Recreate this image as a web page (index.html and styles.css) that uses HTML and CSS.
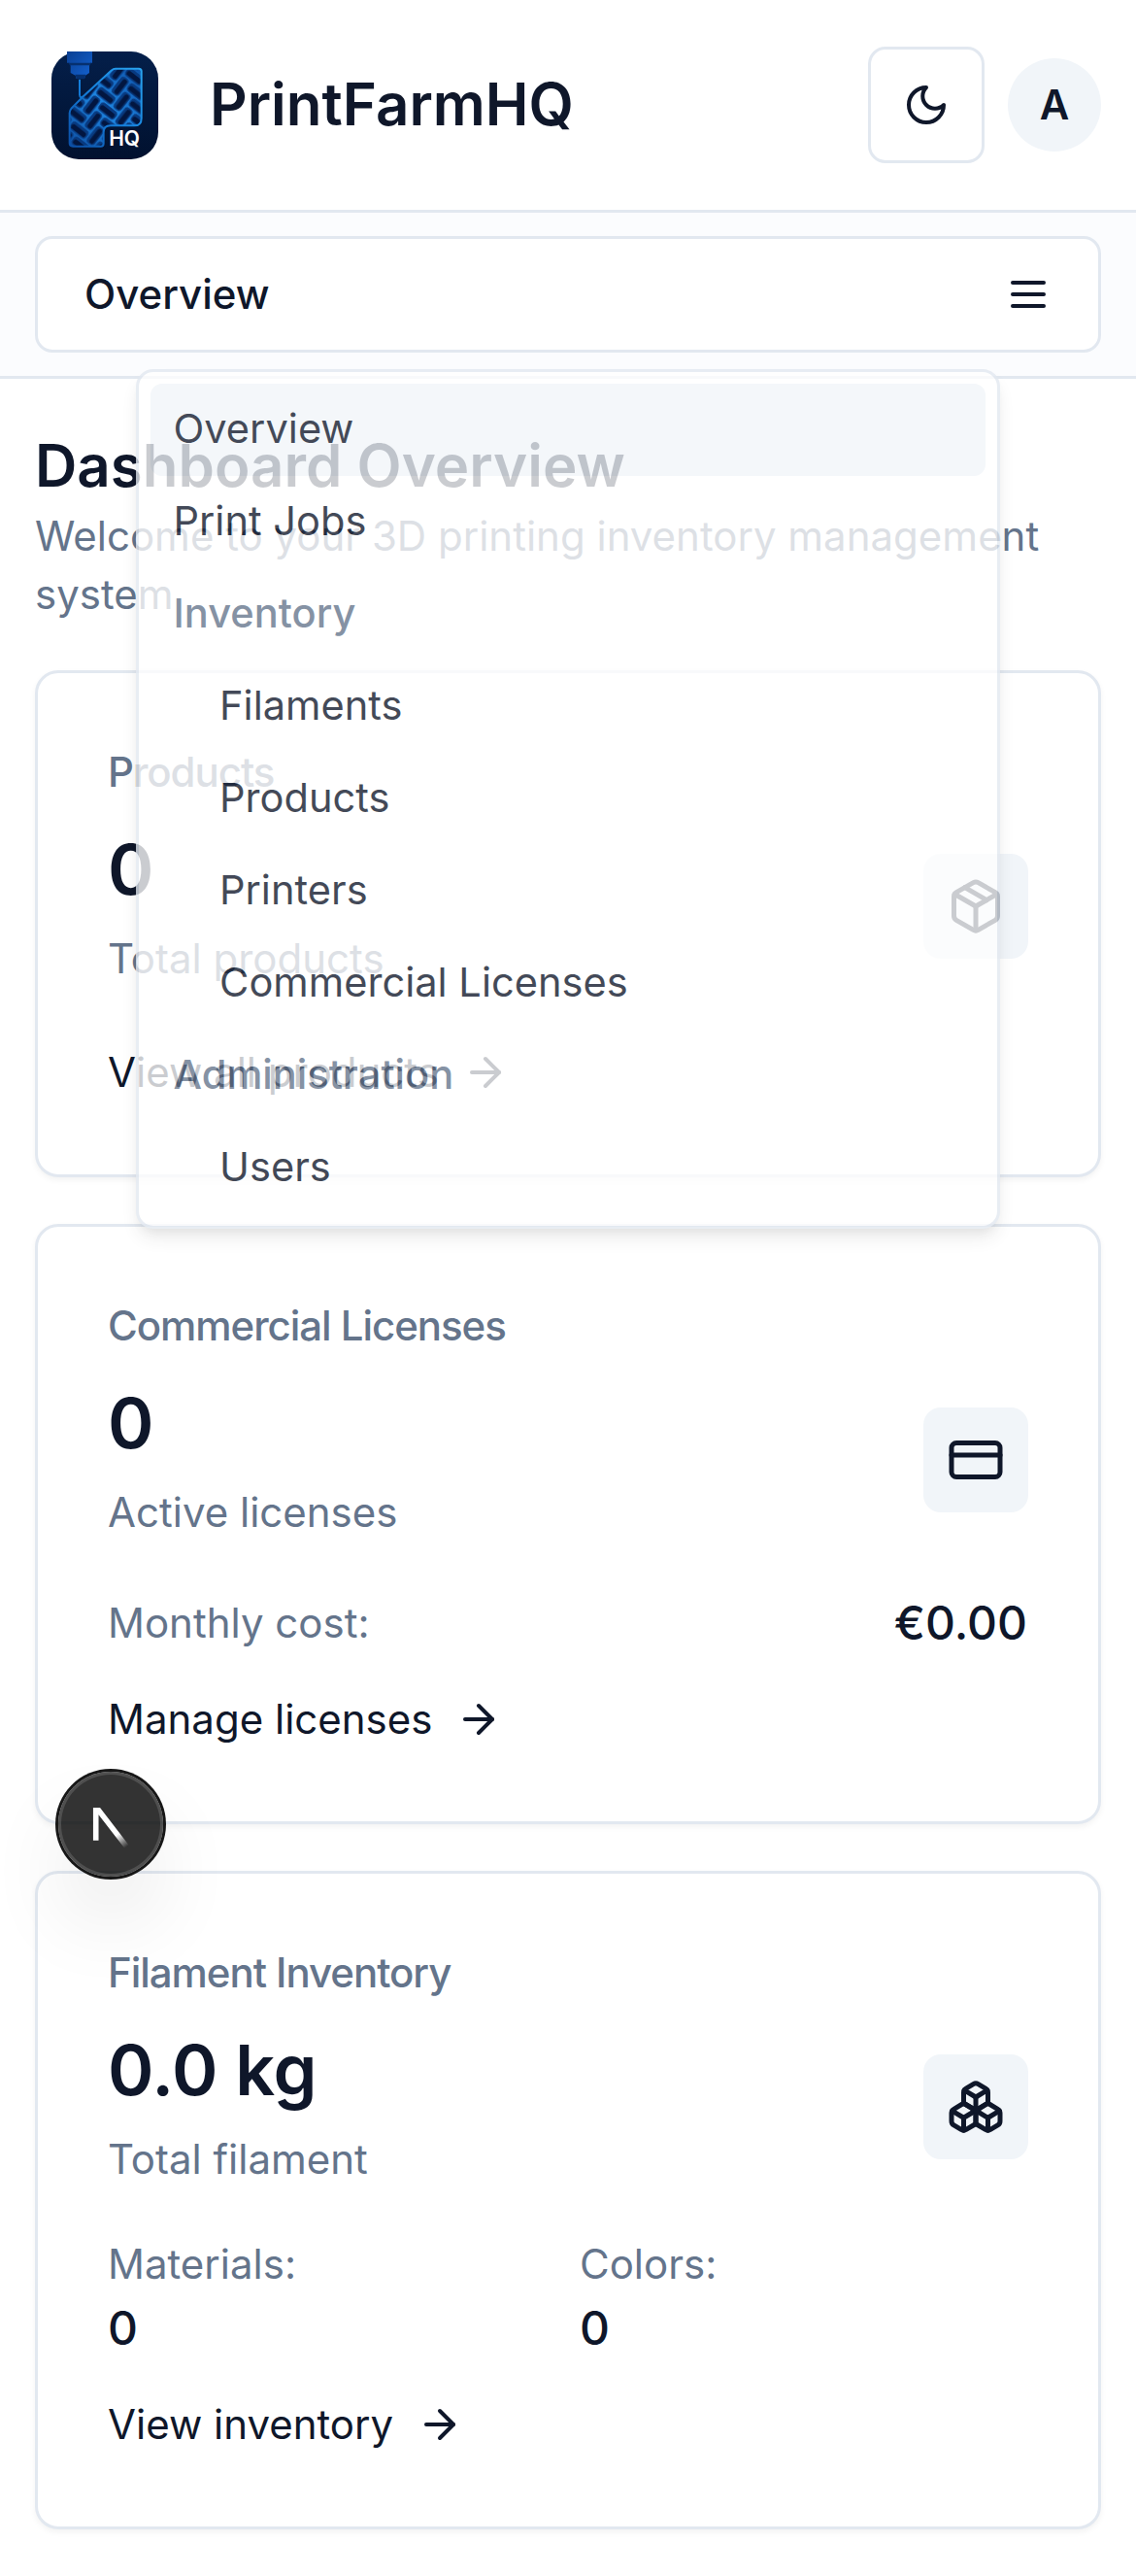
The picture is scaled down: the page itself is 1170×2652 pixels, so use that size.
FILE: index.html
```html
<!DOCTYPE html>
<html lang="en">
<head>
<meta charset="utf-8">
<title>PrintFarmHQ</title>
<link rel="stylesheet" href="styles.css">
</head>
<body>
<svg class="defs" width="0" height="0" aria-hidden="true">
  <symbol id="arrow" viewBox="0 0 24 24"><path d="M5 12h14"/><path d="m12 5 7 7-7 7"/></symbol>
</svg>

<header class="topbar">
  <div class="brand">
    <svg class="logo" viewBox="0 0 330 333">
      <defs>
        <linearGradient id="tile" x1="0" y1="0" x2="0" y2="1"><stop offset="0" stop-color="#041f4a"/><stop offset="1" stop-color="#01112f"/></linearGradient>
        <linearGradient id="edge" x1="1" y1="0" x2="0" y2="1"><stop offset="0" stop-color="#2aa5f0"/><stop offset=".5" stop-color="#1580dc"/><stop offset="1" stop-color="#0b4ea6"/></linearGradient>
        <linearGradient id="strand" x1="1" y1="0" x2="0" y2="1"><stop offset="0" stop-color="#0d4fa6"/><stop offset=".5" stop-color="#1e86e2"/><stop offset="1" stop-color="#0d4c9f"/></linearGradient>
        <linearGradient id="metal" x1="0" y1="0" x2="1" y2="1"><stop offset="0" stop-color="#0a3f92"/><stop offset="1" stop-color="#1463d2"/></linearGradient>
        <clipPath id="part"><path d="M56 184 191 54H270Q278 54 278 62V206Q278 229 256 229H182Q161 229 161 250V284Q161 293 152 293H66Q56 293 56 283Z"/></clipPath>
        <!-- herringbone infill, one repeat is four cells square -->
        <pattern id="weave" width="112" height="112" patternUnits="userSpaceOnUse" patternTransform="translate(46 20) rotate(38) scale(1.2)">
          <g class="cell">
            <rect x="2" y="2" width="52" height="24" rx="9"/>
            <rect x="30" y="30" width="52" height="24" rx="9"/>
            <rect x="58" y="58" width="52" height="24" rx="9"/>
            <rect x="86" y="86" width="52" height="24" rx="9"/>
            <rect x="-26" y="86" width="52" height="24" rx="9"/>
            <rect x="86" y="2" width="24" height="52" rx="9"/>
            <rect x="2" y="30" width="24" height="52" rx="9"/>
            <rect x="30" y="58" width="24" height="52" rx="9"/>
            <rect x="58" y="86" width="24" height="52" rx="9"/>
            <rect x="58" y="-26" width="24" height="52" rx="9"/>
          </g>
          <g class="hollow">
            <path d="M12 16H44M40 44H72M68 72H100M96 100H128M-16 100H16"/>
            <path d="M100 12V44M16 40V72M44 68V100M72 96V128M72 -16V16"/>
          </g>
        </pattern>
      </defs>
      <rect width="330" height="333" rx="84" fill="url(#tile)"/>
      <g clip-path="url(#part)">
        <rect x="50" y="50" width="235" height="250" fill="url(#strand)"/>
        <rect width="330" height="333" fill="url(#weave)"/>
      </g>
      <path d="M87 86V133Q88 148 99 138L186 58Q191 53 198 53H270Q278 53 278 61V206Q278 229 256 229H182Q161 229 161 250V284Q161 293 152 293H66Q56 293 56 283V190Q56 182 62 175L99 138" fill="none" stroke="url(#edge)" stroke-width="6" stroke-linejoin="round"/>
      <path d="M48 0H126V35H120L117 44V66L105 74L102 84H77L74 74L59 66V44L55 35H48Z" fill="url(#metal)"/>
      <path d="M52 35H123L118 43H57ZM73 71H106L102 85H78Z" fill="#06306f"/>
      <text x="178" y="291" class="logo-text">HQ</text>
    </svg>
    <span class="brand-name">PrintFarmHQ</span>
  </div>
  <div class="actions">
    <button class="theme" aria-label="Toggle theme"><svg class="icon" viewBox="0 0 24 24"><path d="M12 3a6 6 0 0 0 9 9 9 9 0 1 1-9-9Z"/></svg></button>
    <span class="avatar">A</span>
  </div>
</header>

<nav class="subnav">
  <button class="nav-trigger">
    <span>Overview</span>
    <svg class="icon" viewBox="0 0 24 24"><path d="M4 6h16M4 12h16M4 18h16"/></svg>
  </button>
  <div class="menu">
    <div class="item active">Overview</div>
    <div class="item">Print Jobs</div>
    <div class="item group">Inventory</div>
    <div class="item sub">Filaments</div>
    <div class="item sub">Products</div>
    <div class="item sub">Printers</div>
    <div class="item sub">Commercial Licenses</div>
    <div class="item group">Administration</div>
    <div class="item sub">Users</div>
  </div>
</nav>

<main class="page">
  <div class="intro">
    <h1>Dashboard Overview</h1>
    <p>Welcome to your 3D printing inventory management system</p>
  </div>

  <section class="card">
    <h2>Products</h2>
    <div class="stat">
      <div><div class="value">0</div><div class="caption">Total products</div></div>
      <span class="badge"><svg class="icon" viewBox="0 0 24 24"><path d="m7.5 4.27 9 5.15"/><path d="M21 8a2 2 0 0 0-1-1.73l-7-4a2 2 0 0 0-2 0l-7 4A2 2 0 0 0 3 8v8a2 2 0 0 0 1 1.73l7 4a2 2 0 0 0 2 0l7-4A2 2 0 0 0 21 16Z"/><path d="m3.3 7 8.7 5 8.7-5"/><path d="M12 22V12"/></svg></span>
    </div>
    <div class="details"><a class="link">View all products<svg class="icon"><use href="#arrow"/></svg></a></div>
  </section>

  <section class="card">
    <h2>Commercial Licenses</h2>
    <div class="stat">
      <div><div class="value">0</div><div class="caption">Active licenses</div></div>
      <span class="badge"><svg class="icon" viewBox="0 0 24 24"><rect width="20" height="14" x="2" y="5" rx="2"/><path d="M2 10h20"/></svg></span>
    </div>
    <div class="details">
      <div class="row"><span class="caption">Monthly cost:</span><span class="amount">€0.00</span></div>
      <a class="link">Manage licenses<svg class="icon"><use href="#arrow"/></svg></a>
    </div>
  </section>

  <section class="card">
    <h2>Filament Inventory</h2>
    <div class="stat">
      <div><div class="value">0.0 kg</div><div class="caption">Total filament</div></div>
      <span class="badge"><svg class="icon" viewBox="0 0 24 24"><path d="M2.97 12.92A2 2 0 0 0 2 14.63v3.24a2 2 0 0 0 .97 1.71l3 1.8a2 2 0 0 0 2.06 0L12 19v-5.5l-5-3-4.03 2.42Z"/><path d="m7 16.5-4.74-2.85"/><path d="m7 16.5 5-3"/><path d="M7 16.5v5.17"/><path d="M12 13.5V19l3.97 2.38a2 2 0 0 0 2.06 0l3-1.8a2 2 0 0 0 .97-1.71v-3.24a2 2 0 0 0-.97-1.71L17 10.5l-5 3Z"/><path d="m17 16.5-5-3"/><path d="m17 16.5 4.74-2.85"/><path d="M17 16.5v5.17"/><path d="M7.97 4.42A2 2 0 0 0 7 6.13v4.37l5 3 5-3V6.13a2 2 0 0 0-.97-1.71l-3-1.8a2 2 0 0 0-2.06 0l-3 1.8Z"/><path d="M12 8 7.26 5.15"/><path d="m12 8 4.74-2.85"/><path d="M12 13.5V8"/></svg></span>
    </div>
    <div class="details">
      <div class="pair">
        <div><div class="caption">Materials:</div><div class="amount">0</div></div>
        <div><div class="caption">Colors:</div><div class="amount">0</div></div>
      </div>
      <a class="link">View inventory<svg class="icon"><use href="#arrow"/></svg></a>
    </div>
  </section>
</main>

<div class="dev-badge">
  <svg viewBox="0 0 36 36">
    <defs>
      <linearGradient id="fade" gradientUnits="userSpaceOnUse" x1="9.6" y1="10.6" x2="12.8" y2="14.8"><stop stop-color="#fff"/><stop offset="1" stop-color="#fff" stop-opacity="0"/></linearGradient>
      <clipPath id="top"><rect x="0" y="1.33" width="20" height="20"/></clipPath>
    </defs>
    <g transform="translate(10.57 11)"><path d="M13.3 15.2 2.34 1V12.6" fill="none" stroke="url(#fade)" stroke-width="1.86" clip-path="url(#top)"/></g>
  </svg>
</div>
</body>
</html>
```
FILE: styles.css
```css
* { box-sizing: border-box; margin: 0; }

body {
  position: relative;
  min-height: 2652px;
  background: #fff;
  color: #0f172a;
  font: 400 42px/60px Inter, "Liberation Sans", sans-serif;
  font-optical-sizing: none;
  font-variation-settings: "opsz" 14;
}

button { background: #fff; color: inherit; font: inherit; font-variation-settings: inherit; }
.defs { position: absolute; }

.icon {
  width: 48px;
  height: 48px;
  flex: none;
  fill: none;
  stroke: currentColor;
  stroke-width: 2;
  stroke-linecap: round;
  stroke-linejoin: round;
}

/* Header */
.topbar {
  display: flex;
  align-items: center;
  justify-content: space-between;
  height: 219px;
  padding: 0 36px 0 53px;
  border-bottom: 3px solid #e2e8f0;
}
.brand { display: flex; align-items: center; gap: 53px; }
.logo { width: 110px; height: 111px; }
.logo-text { font: 600 63px Inter, sans-serif; fill: #fff; letter-spacing: -1px; }
.cell rect { fill: #083a80; }
.hollow path { fill: none; stroke: #021640; stroke-width: 13; stroke-linecap: round; }
.brand-name { padding-bottom: 2px; font-size: 60px; line-height: 84px; font-weight: 600; }
.actions { display: flex; align-items: center; gap: 24px; }
.theme {
  display: grid;
  place-items: center;
  width: 120px;
  height: 120px;
  padding: 0;
  border: 3px solid #e2e8f0;
  border-radius: 18px;
}
.avatar {
  display: grid;
  place-items: center;
  width: 96px;
  height: 96px;
  border-radius: 50%;
  background: #f1f5f9;
  font-weight: 600;
}

/* Navigation */
.subnav {
  position: relative;
  height: 171px;
  padding: 24px 36px;
  border-bottom: 3px solid #e2e8f0;
  background: #fbfcfe;
}
.nav-trigger {
  display: flex;
  align-items: center;
  justify-content: space-between;
  width: 100%;
  height: 120px;
  padding: 0 48px;
  border: 3px solid #e2e8f0;
  border-radius: 18px;
  font-weight: 500;
}
.menu {
  position: absolute;
  z-index: 2;
  top: 161px;
  left: 140px;
  width: 890px;
  padding: 12px;
  border: 3px solid #e2e8f0;
  border-radius: 18px;
  background: #fff;
  box-shadow: 0 12px 18px -3px rgba(0, 0, 0, .1), 0 6px 12px -6px rgba(0, 0, 0, .1);
  opacity: .78;
}
.item {
  height: 95px;
  padding-left: 23.5px;
  border-radius: 12px;
  font-size: 41.6px;
  line-height: 93px;
}
.item.active { background: #f1f5f9; }
.item.group { color: #64748b; font-weight: 500; }
.item.sub { padding-left: 71px; }

/* Page */
.page { display: flex; flex-direction: column; gap: 48px; padding: 48px 36px; }
h1 { padding-bottom: 2px; font-size: 60px; line-height: 82px; font-weight: 600; }
.intro p, .caption, h2 { color: #64748b; }

.card {
  padding: 72px;
  border: 3px solid #e2e8f0;
  border-radius: 24px;
  background: #fff;
  box-shadow: 0 3px 6px rgba(0, 0, 0, .05);
}
h2 { font-size: 42px; line-height: 60px; font-weight: 500; letter-spacing: -1.05px; }
.stat { display: flex; align-items: center; justify-content: space-between; margin-top: 24px; }
.value { margin-bottom: 17px; font-size: 72px; line-height: 91px; font-weight: 600; letter-spacing: -.2px; }
.badge {
  display: grid;
  place-items: center;
  width: 108px;
  height: 108px;
  border-radius: 18px;
  background: #f1f5f9;
}
.badge .icon { width: 60px; height: 60px; }
.details { display: flex; flex-direction: column; gap: 24px; margin-top: 48px; }
.row { display: flex; align-items: center; justify-content: space-between; padding-right: 1px; }
.amount { font-size: 48px; line-height: 72px; font-weight: 500; }
.pair { display: grid; grid-template-columns: 1fr 1fr; gap: 24px; }
.link { display: flex; align-items: center; gap: 24px; height: 72px; padding: 9px 0 3px; }

/* Floating development indicator */
.dev-badge {
  position: absolute;
  z-index: 3;
  left: 60px;
  top: 1824px;
  width: 108px;
  height: 108px;
  border-radius: 50%;
  background: rgba(0, 0, 0, .8);
  box-shadow: 0 0 0 3px #171717, inset 0 0 0 3px rgba(255, 255, 255, .14), 0 48px 96px -24px rgba(0, 0, 0, .24);
}
.dev-badge svg { display: block; width: 108px; height: 108px; }
```
